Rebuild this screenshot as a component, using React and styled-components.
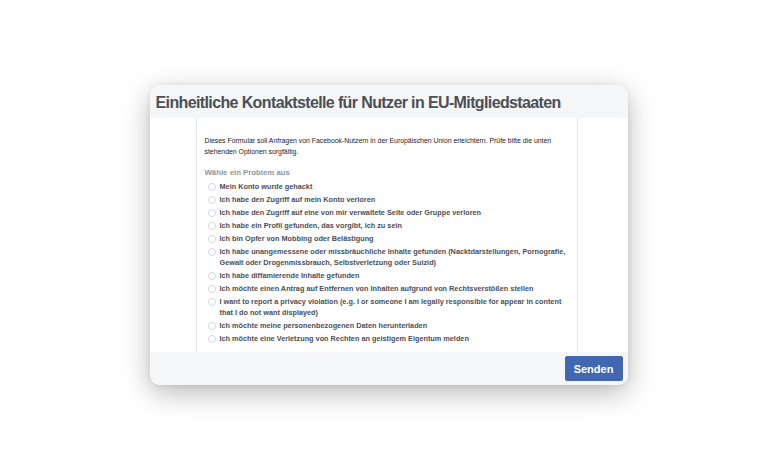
import React from 'react';
import styled, { createGlobalStyle } from 'styled-components';

const GlobalStyle = createGlobalStyle`
  html, body {
    margin: 0;
    padding: 0;
    background: #ffffff;
  }
  body {
    font-family: "Liberation Sans", Helvetica, Arial, sans-serif;
  }
`;

const OPTIONS = [
  'Mein Konto wurde gehackt',
  'Ich habe den Zugriff auf mein Konto verloren',
  'Ich habe den Zugriff auf eine von mir verwaltete Seite oder Gruppe verloren',
  'Ich habe ein Profil gefunden, das vorgibt, ich zu sein',
  'Ich bin Opfer von Mobbing oder Belästigung',
  'Ich habe unangemessene oder missbräuchliche Inhalte gefunden (Nacktdarstellungen, Pornografie, Gewalt oder Drogenmissbrauch, Selbstverletzung oder Suizid)',
  'Ich habe diffamierende Inhalte gefunden',
  'Ich möchte einen Antrag auf Entfernen von Inhalten aufgrund von Rechtsverstößen stellen',
  'I want to report a privacy violation (e.g. I or someone I am legally responsible for appear in content that I do not want displayed)',
  'Ich möchte meine personenbezogenen Daten herunterladen',
  'Ich möchte eine Verletzung von Rechten an geistigem Eigentum melden',
];

function App() {
  return (
    <Page>
      <GlobalStyle />
      <Card>
        <Header>
          <Title>Einheitliche Kontaktstelle für Nutzer in EU-Mitgliedstaaten</Title>
        </Header>
        <Body>
          <Column>
            <Intro>
              Dieses Formular soll Anfragen von Facebook-Nutzern in der Europäischen Union erleichtern. Prüfe bitte die unten
              stehenden Optionen sorgfältig.
            </Intro>
            <Label>Wähle ein Problem aus</Label>
            <OptionList>
              {OPTIONS.map((text) => (
                <Option key={text}>
                  <Radio type="radio" name="problem" />
                  <OptionText>{text}</OptionText>
                </Option>
              ))}
            </OptionList>
          </Column>
        </Body>
        <Footer>
          <SendButton>Senden</SendButton>
        </Footer>
      </Card>
    </Page>
  );
}

const Page = styled.div`
  width: 775px;
  height: 470px;
  display: flex;
  align-items: center;
  justify-content: center;
  padding-left: 2px;
  box-sizing: border-box;
`;

const Card = styled.div`
  width: 478px;
  height: 300px;
  border-radius: 10px;
  overflow: hidden;
  background: #fff;
  display: flex;
  flex-direction: column;
  box-shadow: 0 8px 28px rgba(0, 0, 0, 0.28), 0 0 6px rgba(0, 0, 0, 0.08);
`;

const Header = styled.div`
  height: 33px;
  background: #f5f6f7;
  display: flex;
  align-items: center;
  padding: 0 6px;
  flex-shrink: 0;
`;

const Title = styled.h1`
  margin: 2px 0 0;
  font-size: 16px;
  font-weight: 700;
  color: #4b4f56;
  white-space: nowrap;
  letter-spacing: -0.62px;
`;

const Body = styled.div`
  flex: 1;
  display: flex;
  padding-left: 46px;
  min-height: 0;
`;

const Column = styled.div`
  width: 382px;
  border-left: 1px solid #e5e6e9;
  border-right: 1px solid #e5e6e9;
  padding: 17px 8px 0;
  box-sizing: border-box;
`;

const Intro = styled.p`
  margin: 0;
  font-size: 6.9px;
  line-height: 11px;
  color: #1d2129;
`;

const Label = styled.div`
  margin-top: 10px;
  font-size: 7.8px;
  font-weight: 700;
  line-height: 11px;
  color: #90949c;
`;

const OptionList = styled.div`
  margin-top: 3px;
  display: flex;
  flex-direction: column;
  gap: 2px;
`;

const Option = styled.label`
  display: flex;
  align-items: flex-start;
  gap: 4px;
`;

const Radio = styled.input`
  appearance: none;
  margin: 2px 0 0 3px;
  width: 8px;
  height: 8px;
  border-radius: 50%;
  border: 1px solid #d3d6db;
  background: #fff;
  flex-shrink: 0;
  box-sizing: border-box;
`;

const OptionText = styled.span`
  font-size: 7.3px;
  font-weight: 700;
  line-height: 11px;
  color: #4b4f56;
`;

const Footer = styled.div`
  height: 33px;
  background: #f5f6f7;
  display: flex;
  align-items: center;
  justify-content: flex-end;
  padding: 0 5px;
  flex-shrink: 0;
`;

const SendButton = styled.button`
  width: 58px;
  height: 25px;
  background: #4267b2;
  border: 1px solid #4267b2;
  border-radius: 2px;
  color: #fff;
  font-family: inherit;
  font-size: 11px;
  font-weight: 700;
  padding: 0;
  cursor: pointer;
`;

export default App;
